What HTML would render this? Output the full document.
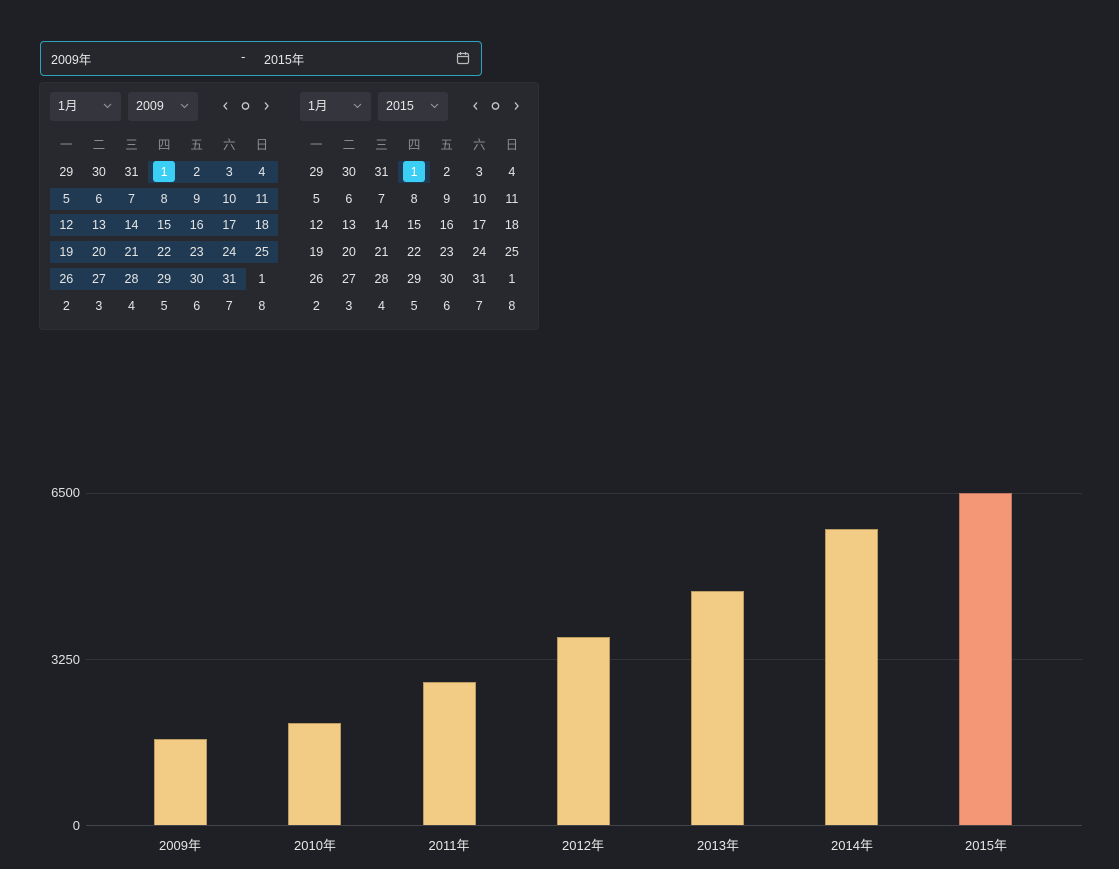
<!DOCTYPE html>
<html><head><meta charset="utf-8"><style>
*{box-sizing:border-box;margin:0;padding:0}
body{width:1119px;height:869px;background:#1f2025;font-family:"Liberation Sans","Noto Sans CJK SC",sans-serif;color:#e6e6e6;position:relative;overflow:hidden;font-size:13px}
.abs{position:absolute}
.input{left:40px;top:41px;width:442px;height:35px;border:1px solid #2fa3bd;border-radius:4px;background:#26272d}
.panel{left:39px;top:82px;width:500px;height:248px;background:#28292f;border-radius:4px;border:1px solid #2e2f35}
.sel{height:29px;background:#35363d;border-radius:3px;font-size:12.5px;line-height:29px;padding-left:8px;color:#e6e6e6}
.sel svg{position:absolute;right:9px;top:11px}
.grid{display:grid;grid-template-columns:repeat(7,32.6px);grid-auto-rows:22px;row-gap:4.8px;width:228px}
.grid div{text-align:center;line-height:22px;font-size:12.5px;color:#e4e4e4;position:relative}
.grid .h{color:#8a8b90}
.grid .r{background:#1f3a52}
.grid .s span{display:inline-block;width:22px;height:21px;background:#3ccff5;border-radius:3px;color:#fff}
.ylab{font-size:13px;color:#e0e0e0;text-align:right;width:40px;left:40px}
.gl{left:86px;width:996px;height:1px;background:#33343a}
.bar{width:53px;background:#f2cc84;border:1px solid #b99a60;border-bottom:none}
.xl{font-size:13px;color:#e6e6e6;width:80px;text-align:center;top:835px}
</style></head><body>
<div class="abs input"></div>
<div class="abs" style="left:51px;top:49px;font-size:12.5px">2009年</div>
<div class="abs" style="left:241px;top:49px">-</div>
<div class="abs" style="left:264px;top:49px;font-size:12.5px">2015年</div>
<svg class="abs" style="left:456px;top:51px" width="14" height="14" viewBox="0 0 14 14" fill="none" stroke="#bbb" stroke-width="1.2"><rect x="1.5" y="2.5" width="11" height="10" rx="1.5"/><path d="M1.5 5.5h11M4.5 1v3M9.5 1v3"/></svg>

<div class="abs panel"></div>
<div class="abs sel" style="left:50px;top:92px;width:71px">1月<svg width="9" height="6" viewBox="0 0 9 6"><path d="M1 1l3.5 3.5L8 1" stroke="#999" fill="none"/></svg></div>
<div class="abs sel" style="left:128px;top:92px;width:70px">2009<svg width="9" height="6" viewBox="0 0 9 6"><path d="M1 1l3.5 3.5L8 1" stroke="#999" fill="none"/></svg></div>
<div class="abs sel" style="left:300px;top:92px;width:71px">1月<svg width="9" height="6" viewBox="0 0 9 6"><path d="M1 1l3.5 3.5L8 1" stroke="#999" fill="none"/></svg></div>
<div class="abs sel" style="left:378px;top:92px;width:70px">2015<svg width="9" height="6" viewBox="0 0 9 6"><path d="M1 1l3.5 3.5L8 1" stroke="#999" fill="none"/></svg></div>
<svg class="abs" style="left:220px;top:100px" width="52" height="12" viewBox="0 0 52 12" fill="none" stroke="#c8c8c8" stroke-width="1.3"><path d="M7 2.5L4 6l3 3.5"/><circle cx="25.5" cy="6" r="3.2"/><path d="M45 2.5L48 6l-3 3.5"/></svg>
<svg class="abs" style="left:470px;top:100px" width="52" height="12" viewBox="0 0 52 12" fill="none" stroke="#c8c8c8" stroke-width="1.3"><path d="M7 2.5L4 6l3 3.5"/><circle cx="25.5" cy="6" r="3.2"/><path d="M45 2.5L48 6l-3 3.5"/></svg>

<div class="abs grid" style="left:50px;top:134px">
<div class="h">一</div><div class="h">二</div><div class="h">三</div><div class="h">四</div><div class="h">五</div><div class="h">六</div><div class="h">日</div>
<div>29</div><div>30</div><div>31</div><div class="r s"><span>1</span></div><div class="r">2</div><div class="r">3</div><div class="r">4</div>
<div class="r">5</div><div class="r">6</div><div class="r">7</div><div class="r">8</div><div class="r">9</div><div class="r">10</div><div class="r">11</div>
<div class="r">12</div><div class="r">13</div><div class="r">14</div><div class="r">15</div><div class="r">16</div><div class="r">17</div><div class="r">18</div>
<div class="r">19</div><div class="r">20</div><div class="r">21</div><div class="r">22</div><div class="r">23</div><div class="r">24</div><div class="r">25</div>
<div class="r">26</div><div class="r">27</div><div class="r">28</div><div class="r">29</div><div class="r">30</div><div class="r">31</div><div>1</div>
<div>2</div><div>3</div><div>4</div><div>5</div><div>6</div><div>7</div><div>8</div>
</div>
<div class="abs grid" style="left:300px;top:134px">
<div class="h">一</div><div class="h">二</div><div class="h">三</div><div class="h">四</div><div class="h">五</div><div class="h">六</div><div class="h">日</div>
<div>29</div><div>30</div><div>31</div><div class="r s"><span>1</span></div><div>2</div><div>3</div><div>4</div>
<div>5</div><div>6</div><div>7</div><div>8</div><div>9</div><div>10</div><div>11</div>
<div>12</div><div>13</div><div>14</div><div>15</div><div>16</div><div>17</div><div>18</div>
<div>19</div><div>20</div><div>21</div><div>22</div><div>23</div><div>24</div><div>25</div>
<div>26</div><div>27</div><div>28</div><div>29</div><div>30</div><div>31</div><div>1</div>
<div>2</div><div>3</div><div>4</div><div>5</div><div>6</div><div>7</div><div>8</div>
</div>

<div class="abs gl" style="top:493px"></div>
<div class="abs gl" style="top:659px"></div>
<div class="abs gl" style="top:825px;background:#44454b"></div>
<div class="abs ylab" style="top:485px">6500</div>
<div class="abs ylab" style="top:652px">3250</div>
<div class="abs ylab" style="top:818px">0</div>

<div class="abs bar" style="left:154px;top:739px;height:86px"></div>
<div class="abs bar" style="left:288px;top:723px;height:102px"></div>
<div class="abs bar" style="left:423px;top:682px;height:143px"></div>
<div class="abs bar" style="left:557px;top:637px;height:188px"></div>
<div class="abs bar" style="left:691px;top:591px;height:234px"></div>
<div class="abs bar" style="left:825px;top:529px;height:296px"></div>
<div class="abs bar" style="left:959px;top:493px;height:332px;background:#f49776;border-color:#c07660"></div>

<div class="abs xl" style="left:140px">2009年</div>
<div class="abs xl" style="left:275px">2010年</div>
<div class="abs xl" style="left:409px">2011年</div>
<div class="abs xl" style="left:543px">2012年</div>
<div class="abs xl" style="left:678px">2013年</div>
<div class="abs xl" style="left:812px">2014年</div>
<div class="abs xl" style="left:946px">2015年</div>
</body></html>
